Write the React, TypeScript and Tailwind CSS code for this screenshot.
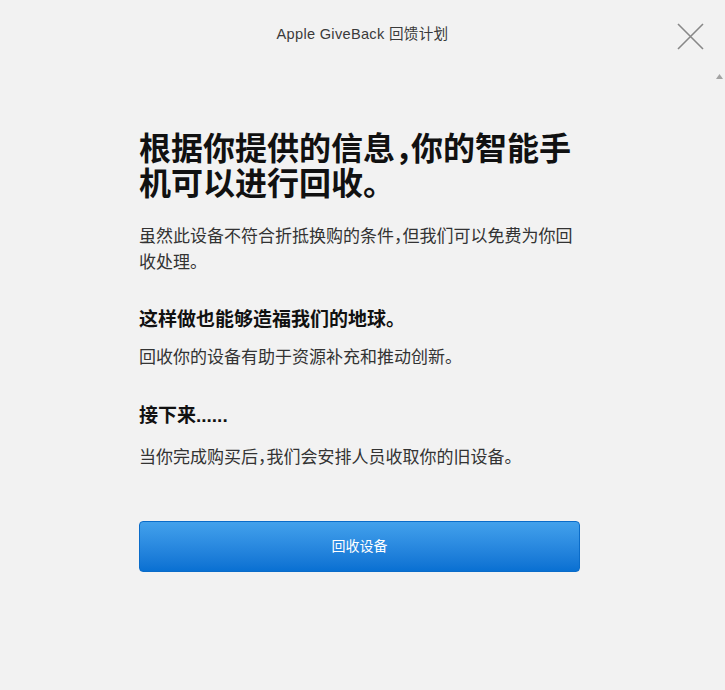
import React from 'react';

const font = '"Helvetica Neue", "Liberation Sans", "Noto Sans CJK SC", sans-serif';

const App: React.FC = () => {
  return (
    <div className="relative min-h-screen bg-[#f2f2f2] text-[#1d1d1f]" style={{ fontFamily: font }}>
      {/* Header */}
      <header className="h-[70px] flex items-center justify-center">
        <span className="text-[14.6px] tracking-[0.3px] text-[#3a3a3a]">Apple GiveBack 回馈计划</span>
      </header>

      {/* Close */}
      <button className="absolute left-[677px] top-[23px] w-[27px] h-[27px]" aria-label="关闭">
        <svg width="27" height="27" viewBox="0 0 27 27" fill="none">
          <path d="M1 1L26 26M26 1L1 26" stroke="#888888" strokeWidth="1.6" />
        </svg>
      </button>

      {/* scrollbar arrow */}
      <svg className="absolute left-[716px] top-[74px]" width="7" height="5" viewBox="0 0 7 5">
        <path d="M3.5 0L7 5H0Z" fill="#a3a3a3" />
      </svg>

      {/* Content */}
      <main className="ml-[139px] w-[441px] [font-feature-settings:'halt']">
        <h1 className="mt-[62px] text-[32px] leading-[35px] font-bold text-[#111111]">
          根据你提供的信息，你的智能手机可以进行回收。
        </h1>
        <p className="mt-[22px] text-[17px] leading-[26px] text-[#333333]">
          虽然此设备不符合折抵换购的条件，但我们可以免费为你回收处理。
        </p>

        <h2 className="mt-[30px] text-[19px] leading-[28px] font-bold text-[#111111]">
          这样做也能够造福我们的地球。
        </h2>
        <p className="mt-[11px] text-[17px] leading-[26px] text-[#333333]">
          回收你的设备有助于资源补充和推动创新。
        </p>

        <h2 className="mt-[31px] text-[19px] leading-[28px] font-bold text-[#111111]">接下来......</h2>
        <p className="mt-[15px] text-[17px] leading-[26px] text-[#333333]">
          当你完成购买后，我们会安排人员收取你的旧设备。
        </p>

        <button className="mt-[50px] w-full h-[51px] rounded-[4px] border border-[#0a6cc9] bg-gradient-to-b from-[#42a1ec] to-[#0870d2] text-white text-[14px] flex items-center justify-center">
          回收设备
        </button>
      </main>
    </div>
  );
};

export default App;
